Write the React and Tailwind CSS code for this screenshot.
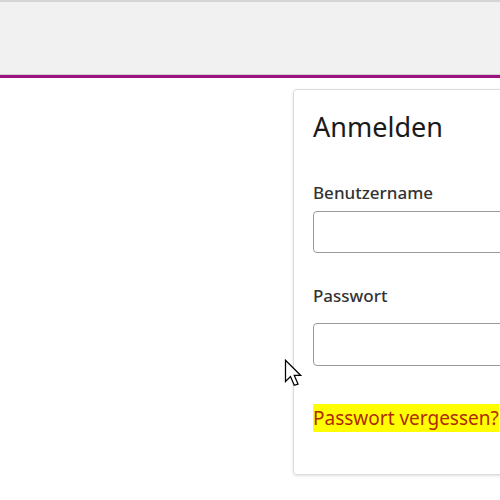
export default function App() {
  return (
    <div className="relative w-[500px] h-[500px] overflow-hidden bg-white" style={{ fontFamily: '"Noto Sans", "Open Sans", sans-serif' }}>
      <header className="h-[77px] bg-[#f1f1f1] border-t-2 border-[#d4d4d4]">
        <div className="h-[72px]" />
        <div className="h-px bg-[#d0d0d0]" />
        <div className="h-[3px] bg-[#9e1280]" />
      </header>

      <div className="flex pt-[12px]">
        <div className="w-[293px] shrink-0" />
        <div className="w-[260px] shrink-0 h-[386px] rounded-[4px] border border-[#dcdcdc] shadow-[0_1px_3px_rgba(0,0,0,0.12)] px-[19px] pt-[20px]">
          <h2 className="text-[27px] leading-[34px] text-[#1a1a1a]">Anmelden</h2>
          <label className="block mt-[38px] text-[17px] leading-[22px] font-medium text-[#333]">Benutzername</label>
          <input className="block mt-[7px] w-[240px] h-[42px] rounded-[4px] border border-[#9a9a9a] bg-white" />
          <label className="block mt-[32px] text-[17px] leading-[22px] font-medium text-[#333]">Passwort</label>
          <input type="password" className="block mt-[16px] w-[240px] h-[43px] rounded-[4px] border border-[#9a9a9a] bg-white" />
          <a href="#" className="inline-block mt-[38px] bg-[#ffff00] text-[#b02a00] text-[19px] leading-[28px] whitespace-nowrap">Passwort vergessen?</a>
        </div>
      </div>

      <svg className="absolute left-[284px] top-[359px]" width="18" height="30" viewBox="0 0 14 24">
        <path d="M1 1 L1 18 L5 14 L8 21 L11 20 L8 13 L13 13 Z" fill="#fff" stroke="#000" strokeWidth="1" strokeLinejoin="miter" />
      </svg>
    </div>
  );
}
